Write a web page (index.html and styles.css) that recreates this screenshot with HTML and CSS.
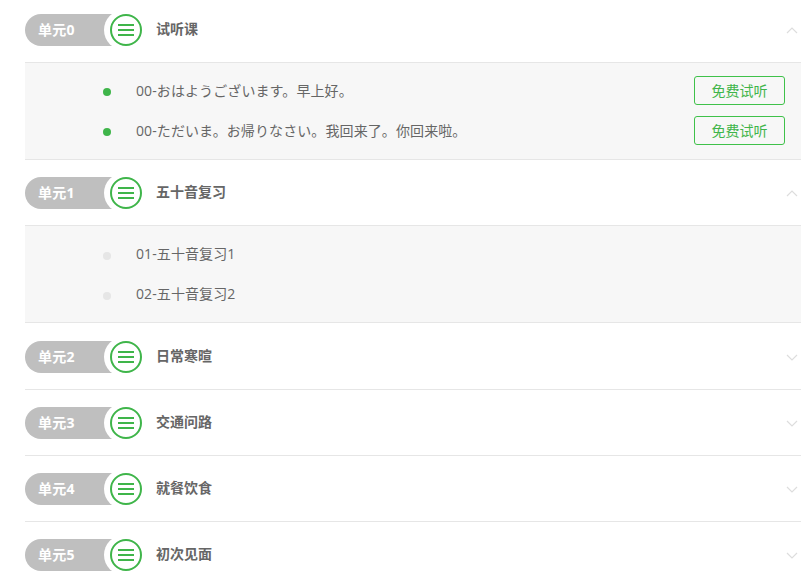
FILE: index.html
```html
<!DOCTYPE html>
<html lang="zh">
<head>
    <meta charset="UTF-8">
    <title>单元列表</title>
    <link rel="stylesheet" href="styles.css">
</head>
<body>
    <div class="list">
        <div class="unit first open">
            <div class="unit_head">
                <span class="pill">单元0</span>
                <span class="round"><svg width="16" height="14" viewBox="0 0 16 14"><path d="M0 2h16M0 7h16M0 12h16" stroke="#3fb54a" stroke-width="2"/></svg></span>
                <span class="unit_title">试听课</span>
                <svg class="arrow" width="12" height="7" viewBox="0 0 12 7"><path d="M1 6l5-5 5 5" fill="none" stroke="#ddd" stroke-width="1.2"/></svg>
            </div>
            <div class="unit_body">
                <div class="lesson">
                    <i class="dot on"></i>
                    <span class="lesson_name">00-おはようございます。早上好。</span>
                    <a class="try_btn">免费试听</a>
                </div>
                <div class="lesson">
                    <i class="dot on"></i>
                    <span class="lesson_name">00-ただいま。お帰りなさい。我回来了。你回来啦。</span>
                    <a class="try_btn">免费试听</a>
                </div>
            </div>
        </div>
        <div class="unit open">
            <div class="unit_head">
                <span class="pill">单元1</span>
                <span class="round"><svg width="16" height="14" viewBox="0 0 16 14"><path d="M0 2h16M0 7h16M0 12h16" stroke="#3fb54a" stroke-width="2"/></svg></span>
                <span class="unit_title">五十音复习</span>
                <svg class="arrow" width="12" height="7" viewBox="0 0 12 7"><path d="M1 6l5-5 5 5" fill="none" stroke="#ddd" stroke-width="1.2"/></svg>
            </div>
            <div class="unit_body">
                <div class="lesson">
                    <i class="dot"></i>
                    <span class="lesson_name">01-五十音复习1</span>
                </div>
                <div class="lesson">
                    <i class="dot"></i>
                    <span class="lesson_name">02-五十音复习2</span>
                </div>
            </div>
        </div>
        <div class="unit after_open">
            <div class="unit_head">
                <span class="pill">单元2</span>
                <span class="round"><svg width="16" height="14" viewBox="0 0 16 14"><path d="M0 2h16M0 7h16M0 12h16" stroke="#3fb54a" stroke-width="2"/></svg></span>
                <span class="unit_title">日常寒暄</span>
                <svg class="arrow" width="12" height="7" viewBox="0 0 12 7"><path d="M1 1l5 5 5-5" fill="none" stroke="#ddd" stroke-width="1.2"/></svg>
            </div>
        </div>
        <div class="unit">
            <div class="unit_head">
                <span class="pill">单元3</span>
                <span class="round"><svg width="16" height="14" viewBox="0 0 16 14"><path d="M0 2h16M0 7h16M0 12h16" stroke="#3fb54a" stroke-width="2"/></svg></span>
                <span class="unit_title">交通问路</span>
                <svg class="arrow" width="12" height="7" viewBox="0 0 12 7"><path d="M1 1l5 5 5-5" fill="none" stroke="#ddd" stroke-width="1.2"/></svg>
            </div>
        </div>
        <div class="unit">
            <div class="unit_head">
                <span class="pill">单元4</span>
                <span class="round"><svg width="16" height="14" viewBox="0 0 16 14"><path d="M0 2h16M0 7h16M0 12h16" stroke="#3fb54a" stroke-width="2"/></svg></span>
                <span class="unit_title">就餐饮食</span>
                <svg class="arrow" width="12" height="7" viewBox="0 0 12 7"><path d="M1 1l5 5 5-5" fill="none" stroke="#ddd" stroke-width="1.2"/></svg>
            </div>
        </div>
        <div class="unit">
            <div class="unit_head">
                <span class="pill">单元5</span>
                <span class="round"><svg width="16" height="14" viewBox="0 0 16 14"><path d="M0 2h16M0 7h16M0 12h16" stroke="#3fb54a" stroke-width="2"/></svg></span>
                <span class="unit_title">初次见面</span>
                <svg class="arrow" width="12" height="7" viewBox="0 0 12 7"><path d="M1 1l5 5 5-5" fill="none" stroke="#ddd" stroke-width="1.2"/></svg>
            </div>
        </div>
    </div>
</body>
</html>
```

FILE: styles.css
```css
html, body {
    margin: 0;
    padding: 0;
    height: 585px;
    overflow: hidden;
    background: #fff;
}
body {
    font-family: "Open Sans", "Noto Sans CJK SC", sans-serif;
    color: #666;
}
.list {
    padding-left: 25px;
}
.after_open {
    margin-top: 1px;
}
.unit_head {
    display: flex;
    align-items: center;
    height: 32px;
    padding: 17px 0 16px;
    border-bottom: 1px solid #e6e6e6;
}
.first .unit_head {
    padding-top: 14px;
}
.pill {
    width: 100px;
    height: 32px;
    box-sizing: border-box;
    margin-right: -15px;
    padding-left: 13px;
    border-radius: 16px 0 0 16px;
    background: #bfbfbf;
    color: #fff;
    font-size: 14px;
    font-weight: bold;
    line-height: 32px;
    letter-spacing: 0.2px;
}
.round {
    position: relative;
    display: flex;
    align-items: center;
    justify-content: center;
    width: 32px;
    height: 32px;
    box-sizing: border-box;
    border: 2px solid #3fb54a;
    border-radius: 50%;
    background: #fff;
    box-shadow: -2px 0 0 4px #fff;
}
.unit_title {
    flex: 1;
    margin-left: 14px;
    padding-bottom: 5px;
    font-size: 14px;
    font-weight: bold;
    color: #666;
}
.arrow {
    margin-right: 3px;
}
.unit_body {
    height: 97px;
    padding: 8px 16px 8px 0;
    box-sizing: border-box;
    border-bottom: 1px solid #e6e6e6;
    background: #f7f7f7;
}
.lesson {
    display: flex;
    align-items: center;
    height: 40px;
}
.dot {
    width: 8px;
    height: 8px;
    margin-top: 4px;
    margin-left: 78px;
    border-radius: 50%;
    background: #e6e6e6;
}
.dot.on {
    margin-top: 2px;
    background: #3fb54a;
}
.lesson_name {
    flex: 1;
    margin-left: 25px;
    padding-bottom: 2px;
    font-size: 14px;
    letter-spacing: 0.1px;
}
.try_btn {
    width: 91px;
    height: 29px;
    box-sizing: border-box;
    margin-bottom: 1px;
    border: 1px solid #3fc14a;
    border-radius: 3px;
    color: #3fb54a;
    font-size: 14px;
    line-height: 27px;
    text-align: center;
}
```
